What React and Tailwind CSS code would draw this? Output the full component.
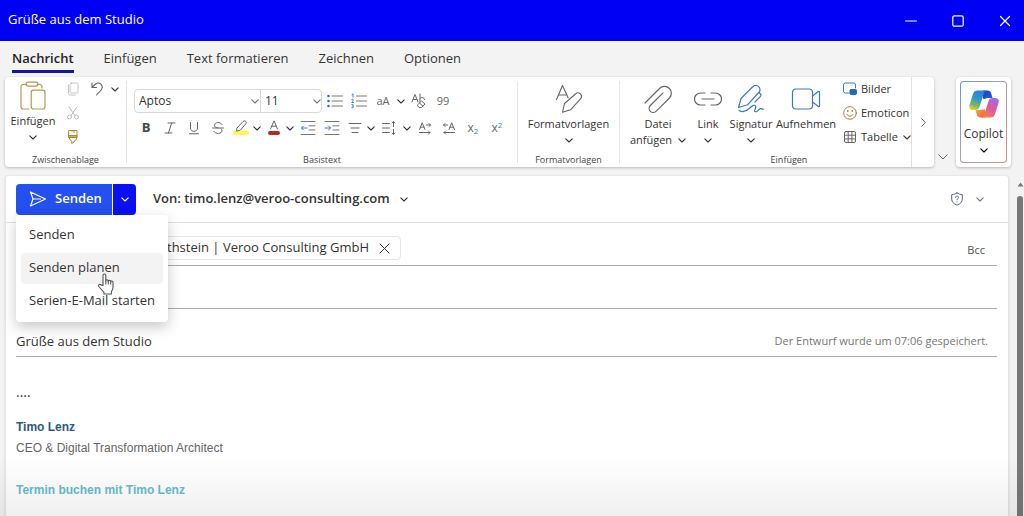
import React from "react";

const stroke = {
  fill: "none",
  stroke: "currentColor",
  strokeLinecap: "round",
  strokeLinejoin: "round",
};

function Chevron({ className = "text-[#333]" }) {
  return (
    <svg viewBox="0 0 8 5" className={`h-[5px] w-2 shrink-0 ${className}`} {...stroke} strokeWidth="1.1" aria-hidden="true">
      <path d="M.8.8 4 4 7.2.8" />
    </svg>
  );
}

function Group({ label, className = "", children }) {
  return (
    <section aria-label={label} className={`flex flex-col ${className}`}>
      <div className="h-[76px]">{children}</div>
      <h2 className="text-center text-[9px] leading-[14px] text-[#444]">{label}</h2>
    </section>
  );
}

function Divider() {
  return <div className="my-1 w-px shrink-0 bg-[#e6e6e6]" />;
}

function Tool({ label, className = "w-6", children }) {
  return (
    <button type="button" aria-label={label} className={`flex h-6 shrink-0 items-center justify-center text-[#666] ${className}`}>
      {children}
    </button>
  );
}

function More({ label }) {
  return (
    <Tool label={label} className="w-3">
      <Chevron />
    </Tool>
  );
}

function Big({ children, className = "", icon }) {
  return (
    <button type="button" className={`flex flex-col items-center text-[11px] leading-4 text-[#333] ${className}`}>
      <span className="flex h-[34px] items-center justify-center">{icon}</span>
      {children}
    </button>
  );
}

const ic = "h-4 w-4";

function PasteIcon() {
  return (
    <svg viewBox="0 0 26 30" className="h-[30px] w-[26px] text-[#b8974f]" {...stroke} strokeWidth="1.2" aria-hidden="true">
      <path d="M7 3.500H3.200A2.200 2.200 0 0 0 1 5.700v20.100A2.200 2.200 0 0 0 3.200 28H9M17 3.500h2.800A2.200 2.200 0 0 1 22 5.700V7" />
      <rect x="6" y="1.200" width="12" height="4" rx="2" />
      <rect x="11.200" y="9.200" width="13.800" height="18.800" rx="2.200" />
    </svg>
  );
}

function StylesIcon() {
  return (
    <svg viewBox="0 0 28 30" className="h-[30px] w-7 text-[#666]" {...stroke} strokeWidth="1.1" aria-hidden="true">
      <path d="M1.500 15.500 7.500 1.500l5.600 12.200M3.600 11h8.200" />
      <path d="m9.500 19.500 11-9.500a3.400 3.400 0 0 1 5 4.800l-10 11L7.500 28.300Z" />
    </svg>
  );
}

function ClipIcon() {
  return (
    <svg viewBox="0 0 30 30" className="h-[30px] w-[30px] text-[#666]" {...stroke} strokeWidth="1.200" aria-hidden="true">
      <path d="M2 19 16.500 4.500a6.800 6.800 0 0 1 10 9.500L13.300 27.200a4 4 0 0 1-6-5.700L20 8.800" />
    </svg>
  );
}

function LinkIcon() {
  return (
    <svg viewBox="0 0 28 14" className="h-3.5 w-7 text-[#666]" {...stroke} strokeWidth="1.200" aria-hidden="true">
      <path d="M11 1H6.500a6 6 0 0 0 0 12H11M17 1h4.500a6 6 0 0 1 0 12H17M8 7h12" />
    </svg>
  );
}

function SignatureIcon() {
  return (
    <svg viewBox="0 0 28 30" className="h-[30px] w-7 text-[#3f76c6]" {...stroke} strokeWidth="1.200" aria-hidden="true">
      <path d="M1.500 23.500 4 14.500 15.500 3a4.300 4.300 0 0 1 7.300 1.200c.6 1.600.2 3-1 4.300L10.500 20.800ZM22.500 9l1 1c.7.8.6 1.700 0 2.400L18 18" />
      <path d="M2 26.500c4 2.500 7.500.7 10.500-2.200 3-3 6-4.200 6.300-1.600.2 1.800-2.400 4.200-.5 5 2 .7 3-2.500 5-3 1.200-.3 1.700.8 3.200.3" />
    </svg>
  );
}

function CameraIcon() {
  return (
    <svg viewBox="0 0 30 24" className="h-6 w-[30px] text-[#3f76c6]" {...stroke} strokeWidth="1.200" aria-hidden="true">
      <rect x="1.500" y="2" width="20" height="20" rx="3.500" />
      <path d="m21.500 9 5.800-4.500c.5-.4 1.200 0 1.200.6v13.800c0 .6-.7 1-1.200.6L21.500 15" />
    </svg>
  );
}

function CopilotLogo() {
  return (
    <svg viewBox="0 0 30 28" className="h-7 w-[30px]" aria-hidden="true">
      <defs>
        <linearGradient id="cpA" x1=".6" y1="0" x2=".3" y2="1">
          <stop offset="0" stopColor="#2b7fe0" />
          <stop offset=".4" stopColor="#2f95cf" />
          <stop offset=".75" stopColor="#6fb866" />
          <stop offset="1" stopColor="#e8cf2e" />
        </linearGradient>
        <linearGradient id="cpB" x1=".7" y1="0" x2=".2" y2="1">
          <stop offset="0" stopColor="#a368e6" />
          <stop offset=".5" stopColor="#dd5a9a" />
          <stop offset="1" stopColor="#f5804a" />
        </linearGradient>
        <linearGradient id="cpC" x1="0" y1="0" x2="1" y2="1">
          <stop offset="0" stopColor="#1a3fae" />
          <stop offset="1" stopColor="#2a5fe0" />
        </linearGradient>
        <linearGradient id="cpD" x1="0" y1="0" x2="1" y2="1">
          <stop offset="0" stopColor="#f2b53a" />
          <stop offset="1" stopColor="#ee5a3c" />
        </linearGradient>
      </defs>
      <path fill="url(#cpC)" d="M14 .5h4.700c1.800 0 2.900 1 3.400 2.700L23.600 8h-4.100c-1.500 0-2.600.5-3.400 1.700L14 8.500Z" />
      <path fill="url(#cpD)" d="M16 27.500h-4.700c-1.800 0-2.900-1-3.400-2.700L6.400 20h4.100c1.500 0 2.600-.5 3.400-1.700l2.100 1.200Z" />
      <path fill="url(#cpA)" d="M8.500.5h8.700c-1.400.4-1.900 1.500-2.400 3l-4.300 13.200c-.7 2.200-1.900 3.300-4 3.300H4c-3 0-4.300-2-3.500-5L4 4C4.700 1.600 6.300.5 8.500.5Z" />
      <path fill="url(#cpB)" d="M21.500 27.500h-8.700c1.400-.4 1.900-1.500 2.400-3l4.300-13.200c.7-2.200 1.900-3.300 4-3.300H26c3 0 4.300 2 3.500 5L26 24c-.7 2.400-2.300 3.500-4.500 3.500Z" />
      <path fill="#fff" d="M17 8.600h2.600c-.8.700-1.200 1.600-1.500 2.600l-2.200 6.700c-.4 1-1.200 1.600-2.300 1.600H11c.7-.7 1.100-1.500 1.400-2.400l2.200-6.700c.4-1.100 1.200-1.800 2.400-1.800Z" />
    </svg>
  );
}

function Lines({ d }) {
  return <path d={d} stroke="#777" />;
}

function Ribbon() {
  return (
    <div className="flex px-[5px]">
      <div className="flex h-[90px] min-w-0 flex-1 overflow-hidden rounded-[4px] bg-white shadow-[0_1px_3px_rgba(0,0,0,0.25)]">
        <Group label="Zwischenablage" className="w-[121px] shrink-0">
          <div className="flex">
            <Big className="w-14 pt-[2px]" icon={<PasteIcon />}>
              Einfügen
              <span className="flex h-4 items-center"><Chevron /></span>
            </Big>
            <div className="flex flex-col">
              <Tool label="Kopieren">
                <svg viewBox="0 0 16 16" className={`${ic} text-[#c4c4c4]`} {...stroke} aria-hidden="true">
                  <rect x="5" y="2" width="8" height="10" rx="1.500" />
                  <path d="M3.500 4v8.500A1.500 1.500 0 0 0 5 14h5.500" />
                </svg>
              </Tool>
              <Tool label="Ausschneiden">
                <svg viewBox="0 0 16 16" className={`${ic} text-[#bbb]`} {...stroke} aria-hidden="true">
                  <path d="m4 2 6 8.500M12 2l-6 8.500" />
                  <circle cx="4.500" cy="12" r="2" />
                  <circle cx="11.500" cy="12" r="2" />
                </svg>
              </Tool>
              <Tool label="Format übertragen">
                <svg viewBox="0 0 16 16" className={`${ic} text-[#b08a3a]`} {...stroke} aria-hidden="true">
                  <path d="M4 1.500h8v7H4Z" />
                  <path d="M4 6.500h8v2H4Z" fill="#d9a93c" />
                  <path d="M4.500 8.500v1.800L6.800 12v2.500L9.200 13v-1l2.300-1.700V8.500M9 1.500v2M7 1.500v1" />
                </svg>
              </Tool>
            </div>
            <Tool label="Rückgängig">
              <svg viewBox="0 0 16 16" className={`${ic} text-[#666]`} {...stroke} strokeWidth="1.100" aria-hidden="true">
                <path d="M3 2v4.500h4.500M3 6.500l2.800-2.800c2-2 4.700-2 6.300-.4s1.600 4.200-.3 6L7.500 14" />
              </svg>
            </Tool>
            <More label="Rückgängig: mehr" />
          </div>
        </Group>
        <Divider />
        <Group label="Basistext" className="w-[390px] shrink-0">
          <div className="flex flex-col gap-[3px] pl-[7px] pt-[12px]">
            <div className="flex items-center">
              <div className="flex h-6 w-[188px] items-center rounded-[4px] border border-[#d8d8d8] text-[12px] text-[#333]">
                <div className="flex w-[126px] items-center border-r border-[#d8d8d8] pr-px">
                  <select aria-label="Schriftart" className="h-[22px] min-w-0 flex-1 appearance-none bg-transparent pl-1 outline-none">
                    <option>Aptos</option>
                  </select>
                  <Chevron className="text-[#777]" />
                </div>
                <div className="flex flex-1 items-center">
                  <select aria-label="Schriftgrad" className="h-[22px] min-w-0 flex-1 appearance-none bg-transparent pl-1 outline-none">
                    <option>11</option>
                  </select>
                  <Chevron className="text-[#777]" />
                </div>
              </div>
              <Tool label="Aufzählung" className="ml-px w-6">
                <svg viewBox="0 0 16 16" className={ic} {...stroke} aria-hidden="true">
                  <Lines d="M5 3h10.500M5 8h10.500M5 13h10.500" />
                  <path d="M1.500 3v0M1.500 8v0M1.500 13v0" stroke="#2f6fbf" strokeWidth="2.600" />
                </svg>
              </Tool>
              <Tool label="Nummerierung">
                <svg viewBox="0 0 16 16" className={ic} {...stroke} aria-hidden="true">
                  <Lines d="M5.500 3h10M5.500 8h10M5.500 13h10" />
                  <path d="m1 1.500 1-.7V4M.8 6.500c2-1 2 .5 0 3h1.700M.8 11.500c2-.7 2 1.300.6 1.500 1.700.2 1.500 2.300-.6 1.700" stroke="#2f6fbf" strokeWidth=".9" />
                </svg>
              </Tool>
              <Tool label="Groß-/Kleinschreibung"><span className="text-[11px]">aA</span></Tool>
              <More label="Groß-/Kleinschreibung: mehr" />
              <Tool label="Formatierung löschen">
                <svg viewBox="0 0 16 16" className={ic} {...stroke} aria-hidden="true">
                  <path d="M1 9 4 1.500 7 9M2 6.500h4M9 1v8M9 5.500c1.500-1.800 4.500-1 4.500 1" />
                  <path d="m6.500 12 4-4 3.500 3-3.500 3.500H8.500Z" fill="#fff" />
                  <path d="m8.500 10 3.500 3.300" />
                </svg>
              </Tool>
              <Tool label="Zitat"><span className="text-[11px]">99</span></Tool>
            </div>
            <div className="flex items-center">
              <Tool label="Fett"><b className="text-[13px] text-[#444]">B</b></Tool>
              <Tool label="Kursiv">
                <svg viewBox="0 0 14 14" className="h-3.5 w-3.5" {...stroke} aria-hidden="true"><path d="M5 2h7M2 12h7M8.700 2l-3.300 10" /></svg>
              </Tool>
              <Tool label="Unterstrichen">
                <svg viewBox="0 0 14 14" className="h-3.5 w-3.5" {...stroke} aria-hidden="true"><path d="M3.500 1.500V7c0 4.500 7 4.500 7 0V1.500M2.500 12.800h9" /></svg>
              </Tool>
              <Tool label="Durchgestrichen">
                <svg viewBox="0 0 14 14" className="h-3.5 w-3.5" {...stroke} aria-hidden="true"><path d="M11 3.500C9.500.500 3.500 1 3.500 4.300c0 2 2 2.300 3.500 2.700M3 10.500c1.500 3 8 2.500 8-.8 0-.8-.3-1.300-.8-1.700M1.500 7h11" /></svg>
              </Tool>
              <Tool label="Hervorheben" className="w-[21px]">
                <svg viewBox="0 0 16 16" className={ic} {...stroke} aria-hidden="true">
                  <path d="M2 13h12" stroke="#fdf94a" strokeWidth="4" />
                  <path d="m4 8 6-6.500a1.800 1.800 0 0 1 2.800 2.300L7.500 10 4 11Z" />
                </svg>
              </Tool>
              <More label="Hervorheben: mehr" />
              <Tool label="Schriftfarbe" className="w-[21px]">
                <svg viewBox="0 0 16 16" className={ic} {...stroke} aria-hidden="true">
                  <path d="m4.500 9 3.500-8.200L11.500 9M5.600 6.200h4.800" />
                  <path d="M4 13h8" stroke="#b8291c" strokeWidth="4" />
                </svg>
              </Tool>
              <More label="Schriftfarbe: mehr" />
              <Tool label="Einzug verkleinern">
                <svg viewBox="0 0 16 16" className={ic} {...stroke} aria-hidden="true">
                  <Lines d="M1 1.500h14M9 5.800h6M9 10h6M1 14.500h14" />
                  <path d="M7 8H1.500M3.500 6l-2 2 2 2" stroke="#2f7fd0" />
                </svg>
              </Tool>
              <Tool label="Einzug vergrößern">
                <svg viewBox="0 0 16 16" className={ic} {...stroke} aria-hidden="true">
                  <Lines d="M1 1.500h14M9 5.800h6M9 10h6M1 14.500h14" />
                  <path d="M1 8h5.500M4.500 6l2 2-2 2" stroke="#2f7fd0" />
                </svg>
              </Tool>
              <Tool label="Ausrichtung" className="w-[21px]">
                <svg viewBox="0 0 14 14" className="h-3.5 w-3.5" {...stroke} aria-hidden="true"><path d="M1 2.500h12M3 7h8M4 11.500h6" /></svg>
              </Tool>
              <More label="Ausrichtung: mehr" />
              <Tool label="Zeilenabstand">
                <svg viewBox="0 0 16 16" className={ic} {...stroke} aria-hidden="true">
                  <path d="M1.500 3.500h7M1.500 8h7M1.500 12.500h7M12.500 1.500v5M12.500 9.500v5M11 3l1.500-1.500L14 3M11 13l1.500 1.500L14 13" />
                </svg>
              </Tool>
              <More label="Zeilenabstand: mehr" />
              <Tool label="Von links nach rechts">
                <svg viewBox="0 0 14 14" className="h-3.5 w-3.5" {...stroke} aria-hidden="true">
                  <path d="m1.500 8.500 2.700-6.700L7 8.500M2.500 6.200h3.500M8.500 4h4M11 2.500 12.500 4 11 5.500M1.500 11.500h10.500M10.500 10l1.500 1.500-1.500 1.500" />
                </svg>
              </Tool>
              <Tool label="Von rechts nach links">
                <svg viewBox="0 0 14 14" className="h-3.5 w-3.5" {...stroke} aria-hidden="true">
                  <path d="m7 8.500 2.700-6.700 2.800 6.700M8 6.200h3.500M5.500 4h-4M3 2.500 1.500 4 3 5.500M12.500 11.500H2M3.500 10 2 11.500 3.500 13" />
                </svg>
              </Tool>
              <Tool label="Tiefgestellt"><span className="text-[12px]">x<sub className="text-[8px] text-[#2f7fd0]">2</sub></span></Tool>
              <Tool label="Hochgestellt"><span className="text-[12px]">x<sup className="text-[8px] text-[#2f7fd0]">2</sup></span></Tool>
            </div>
          </div>
        </Group>
        <Divider />
        <Group label="Formatvorlagen" className="w-[101px] shrink-0">
          <Big className="mx-auto pt-[5px]" icon={<StylesIcon />}>
            Formatvorlagen
            <span className="flex h-4 items-center"><Chevron /></span>
          </Big>
        </Group>
        <Divider />
        <div className="min-w-0 flex-1 overflow-hidden">
          <Group label="Einfügen" className="w-[338px]">
            <div className="flex pl-2">
              <Big className="w-[60px] shrink-0 pt-[5px]" icon={<ClipIcon />}>
                <span>Datei</span>
                <span className="flex items-center gap-[6px] whitespace-nowrap">anfügen <Chevron /></span>
              </Big>
              <Big className="w-10 shrink-0 pt-[5px]" icon={<LinkIcon />}>
                Link
                <span className="flex h-4 items-center"><Chevron /></span>
              </Big>
              <Big className="w-[46px] shrink-0 pt-[5px]" icon={<SignatureIcon />}>
                Signatur
                <span className="flex h-4 items-center"><Chevron /></span>
              </Big>
              <Big className="w-16 shrink-0 pt-[5px]" icon={<CameraIcon />}>Aufnehmen</Big>
              <div className="flex flex-col pl-1 text-[11px] text-[#333]">
                <button type="button" className="flex h-6 items-center gap-[3px]">
                  <svg viewBox="0 0 16 16" className={`${ic} shrink-0 text-[#3f76c6]`} {...stroke} aria-hidden="true">
                    <path d="M7 12H3.500A2 2 0 0 1 1.500 10V4a2 2 0 0 1 2-2h8a2 2 0 0 1 2 2v3" />
                    <rect x="8" y="8.500" width="6.500" height="5" rx="1" fill="#2468b8" stroke="#2468b8" />
                  </svg>
                  Bilder
                </button>
                <button type="button" className="flex h-6 items-center gap-[3px]">
                  <svg viewBox="0 0 16 16" className={`${ic} shrink-0 text-[#a08040]`} {...stroke} aria-hidden="true">
                    <circle cx="8" cy="8" r="6.300" />
                    <path d="M5 9.500c1.200 2.300 4.800 2.300 6 0" />
                    <path d="M5.800 6v0M10.200 6v0" strokeWidth="1.800" />
                  </svg>
                  Emoticon
                </button>
                <button type="button" className="flex h-6 items-center gap-[3px]">
                  <svg viewBox="0 0 16 16" className={`${ic} shrink-0 text-[#666]`} {...stroke} aria-hidden="true">
                    <rect x="2.500" y="2.500" width="11" height="11" rx="1.500" />
                    <path d="M6.200 2.500v11M9.900 2.500v11M2.500 6.200h11M2.500 9.900h11" />
                  </svg>
                  Tabelle <span className="pl-[2px]"><Chevron /></span>
                </button>
              </div>
            </div>
          </Group>
        </div>
        <button type="button" aria-label="Weitere Befehle" className="flex w-[23px] shrink-0 items-center justify-center border-l border-[#e0e0e0] text-[#555]">
          <svg viewBox="0 0 5 9" className="h-[9px] w-[5px]" {...stroke} aria-hidden="true"><path d="m.7.700 3.600 3.800L.7 8.300" /></svg>
        </button>
      </div>
      <button type="button" aria-label="Menüband einklappen" className="flex w-[22px] shrink-0 items-end justify-center pb-[7px] pr-1">
        <svg viewBox="0 0 10 6" className="h-[6px] w-[10px] text-[#666]" {...stroke} aria-hidden="true"><path d="M.7.700 5 5 9.300.700" /></svg>
      </button>
      <div className="mr-2 w-[55px] shrink-0 rounded-[4px] bg-white p-1 shadow-[0_1px_3px_rgba(0,0,0,0.25)]">
        <div className="h-full rounded-[4px] bg-gradient-to-br from-[#5b9be6] via-[#a8a0a8] to-[#e08a90] p-px">
          <button type="button" className="flex h-full w-full flex-col items-center rounded-[3px] bg-white pt-[8px] text-[12px] leading-4 text-[#333]">
            <CopilotLogo />
            <span className="pt-2">Copilot</span>
            <span className="flex h-4 items-center"><Chevron className="text-black" /></span>
          </button>
        </div>
      </div>
    </div>
  );
}

function SendArea() {
  return (
    <div className="relative flex h-[31px]">
      <button type="button" className="flex w-24 items-center gap-2 rounded-l-[4px] bg-[#2350ee] pl-[13px] text-[13px] font-semibold text-white">
        <svg viewBox="0 0 18 16" className="h-4 w-[18px]" {...stroke} strokeWidth="1.200" aria-hidden="true">
          <path d="m1.500 1 15 7-15 7L4 8ZM4 8h7.500" />
        </svg>
        Senden
      </button>
      <button type="button" aria-label="Sendeoptionen" aria-expanded="true" className="ml-px flex w-[23px] items-center justify-center rounded-r-[4px] bg-[#0a10f0]">
        <Chevron className="text-white" />
      </button>
      <div role="menu" className="absolute left-0 top-full z-10 flex w-[152px] flex-col gap-[2px] rounded-[4px] bg-white px-[5px] py-[5px] text-[13px] text-[#333] shadow-[0_5px_14px_rgba(0,0,0,0.22)]">
        <button type="button" role="menuitem" className="h-[31px] rounded-[4px] pl-2 text-left whitespace-nowrap">Senden</button>
        <button type="button" role="menuitem" className="relative h-[31px] rounded-[4px] bg-[#f3f3f3] pl-2 text-left whitespace-nowrap">
          Senden planen
          <svg viewBox="0 0 18 22" className="absolute left-[76px] top-[20px] h-[22px] w-[18px]" fill="#fff" stroke="#555" strokeWidth="1.100" strokeLinejoin="round" strokeLinecap="round" aria-hidden="true">
            <path d="M6 12.500V2.500c0-2 2.800-2 2.800 0V8c0-1.500 2.500-1.500 2.500.3 0-1.300 2.400-1.200 2.400.4 0-1.200 2.300-1 2.300.6v5.200c0 2-1.600 3.500-1.600 4.500v2H7v-1.500L1.800 13.500c-1-1.700.8-2.800 2-1.600Z" />
            <path d="M8.800 8v3M11.300 8.300V11M13.700 8.700V11" />
          </svg>
        </button>
        <button type="button" role="menuitem" className="h-[31px] rounded-[4px] pl-2 text-left whitespace-nowrap">Serien-E-Mail starten</button>
      </div>
    </div>
  );
}

export default function App() {
  return (
    <div className="relative flex h-screen flex-col overflow-hidden bg-[#f3f3f3] font-['Open_Sans',sans-serif] text-[#333]">
      <header className="flex h-[41px] shrink-0 items-center justify-between bg-[#0000f5] pl-2 text-[13px] text-white">
        <h1 className="pb-[2px]">Grüße aus dem Studio</h1>
        <div className="flex">
          <button type="button" aria-label="Minimieren" className="flex h-10 w-[47px] items-center justify-center">
            <svg viewBox="0 0 12 12" className="h-3 w-3" {...stroke}><path d="M.5 6h11" /></svg>
          </button>
          <button type="button" aria-label="Maximieren" className="flex h-10 w-[47px] items-center justify-center">
            <svg viewBox="0 0 12 12" className="h-3 w-3" {...stroke} strokeWidth="1.200"><rect x=".8" y=".8" width="10.400" height="10.400" rx="1.500" /></svg>
          </button>
          <button type="button" aria-label="Schließen" className="flex h-10 w-[43px] items-center justify-center pl-[5px]">
            <svg viewBox="0 0 12 12" className="h-3 w-3" {...stroke} strokeWidth="1.200"><path d="m1.500 1.500 9 9M10.500 1.500l-9 9" /></svg>
          </button>
        </div>
      </header>

      <nav className="flex h-9 shrink-0 items-start gap-[30px] pl-3 pt-[5px] text-[13px] leading-6">
        <button type="button" className="border-b-[3px] border-[#1414a8] font-semibold text-[#222]">Nachricht</button>
        <button type="button">Einfügen</button>
        <button type="button">Text formatieren</button>
        <button type="button">Zeichnen</button>
        <button type="button">Optionen</button>
      </nav>

      <Ribbon />

      <div className="flex min-h-0 flex-1 pt-[9px]">
        <main className="ml-[5px] min-w-0 flex-1 rounded-t-[3px] border-x border-[#e4e4e4] bg-white shadow-[0_0_2px_rgba(0,0,0,0.15)]">
          <div className="flex h-[47px] items-center border-b border-[#e2e2e2] pl-[10px] pr-6">
            <SendArea />
            <button type="button" className="ml-[17px] flex items-center gap-[10px] text-[13px] font-semibold text-[#333]">
              Von: timo.lenz@veroo-consulting.com
              <Chevron />
            </button>
            <div className="ml-auto flex items-center gap-3">
              <button type="button" aria-label="Vertraulichkeit">
                <svg viewBox="0 0 14 14" className="h-3.5 w-3.5 text-[#5a6a80]" {...stroke} aria-hidden="true">
                  <path d="M7 1c1.600 1 3.300 1.500 5.300 1.600V7c0 3-2 4.900-5.300 6.200C3.700 11.900 1.700 10 1.700 7V2.600C3.700 2.500 5.400 2 7 1Z" />
                  <path d="M5.500 5.500c0-2 3-2 3 0C8.500 6.500 7 6.600 7 7.800M7 9.700v0" />
                </svg>
              </button>
              <button type="button" aria-label="Weitere Optionen"><Chevron className="text-[#777]" /></button>
            </div>
          </div>

          <div className="ml-[10px] mr-[11px] flex h-[43px] items-center justify-between border-b border-[#aaa] pb-[3px] pt-[11px]">
            <div className="ml-[100px] flex h-6 items-center gap-[10px] rounded-[4px] border border-[#e6e6e6] pl-[50px] pr-[10px] text-[13px]">
              thstein | Veroo Consulting GmbH
              <button type="button" aria-label="Empfänger entfernen">
                <svg viewBox="0 0 11 11" className="h-[11px] w-[11px]" {...stroke} aria-hidden="true"><path d="m1 1 9 9M10 1l-9 9" /></svg>
              </button>
            </div>
            <button type="button" className="pr-3 pt-1 text-[11px] text-[#555]">Bcc</button>
          </div>
          <div className="ml-[10px] mr-[11px] flex h-[43px] border-b border-[#aaa]">
            <input aria-label="Cc" className="ml-[152px] flex-1 bg-transparent text-[13px] outline-none" />
          </div>
          <div className="ml-[10px] mr-[11px] flex h-[48px] items-center border-b border-[#aaa] pr-[9px] pt-[18px]">
            <input aria-label="Betreff" defaultValue="Grüße aus dem Studio" className="min-w-0 flex-1 bg-transparent text-[13px] text-[#333] outline-none" />
            <span className="text-[11px] text-[#777]">Der Entwurf wurde um 07:06 gespeichert.</span>
          </div>

          <div className="px-[10px] pt-[24px] font-['Liberation_Sans',Arial,sans-serif] text-[12px] leading-[21px]">
            <p className="font-['Open_Sans',sans-serif] text-[14px]">....</p>
            <p className="pt-[15px] font-bold text-[#2c5a80]">Timo Lenz</p>
            <p className="text-[#666]">CEO &amp; Digital Transformation Architect</p>
            <p className="pt-[21px]"><a href="#termin" className="font-bold text-[#68bccb]">Termin buchen mit Timo Lenz</a></p>
          </div>
        </main>
        <div className="flex w-[15px] shrink-0 flex-col items-end gap-[9px] pt-[6px]">
          <svg viewBox="0 0 7 5" className="h-[5px] w-[7px]" aria-hidden="true"><path d="M3.500.500 6.500 4.500h-6Z" fill="#777" /></svg>
          <div className="mr-px w-[6px] flex-1 rounded-t-full bg-[#787878]" />
        </div>
      </div>
      <div className="pointer-events-none absolute inset-x-0 bottom-0 h-[60px] bg-gradient-to-b from-transparent to-black/6" />
    </div>
  );
}
